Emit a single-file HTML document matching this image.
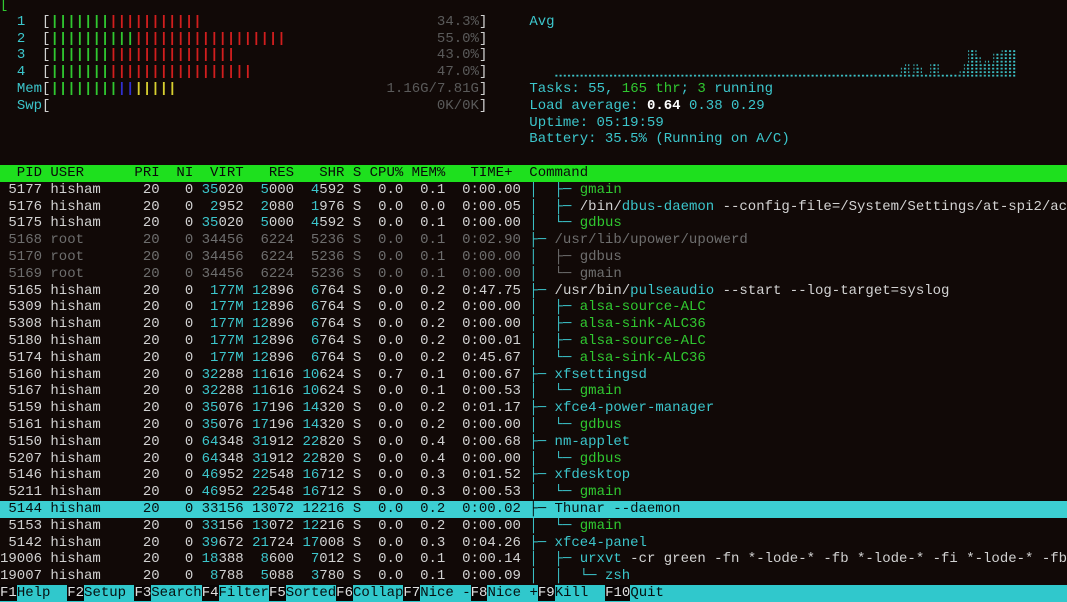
<!DOCTYPE html>
<html><head><meta charset="utf-8">
<style>
html,body{margin:0;padding:0;background:#110907;width:1067px;height:598px;overflow:hidden}
#t{position:absolute;left:0;top:-3px;margin:0;font-family:"Liberation Mono","DejaVu Sans Mono",monospace;font-size:14px;line-height:16.8px;color:#d2d2d2;white-space:pre}
#t div{height:16.8px;width:1067px;overflow:hidden}
.c{color:#3cc6cc}.g{color:#30c830}.r{color:#d21e1e}.b{color:#3030d0}.y{color:#d8d030}
.d{color:#6e6e6e}.w{color:#ffffff;font-weight:bold}.p{color:#5a5a5a}
.bar{font-weight:bold}
.hd{background:#1ee01e;color:#0a0a0a}
.sel{background:#3ccfd2;color:#061010}
.sel span{color:#061010}
.bot{background:#30c8cc;color:#061010}
.k{background:#0a0505;color:#e0e0e0}
#gr{position:absolute;left:0;top:0}
</style></head><body>
<pre id="t"><div><span class="g">[</span></div><div>  <span class="c">1</span>  [<span class="bar"><span class="g">|||||||</span><span class="r">|||||||||||</span></span>                            <span class="p">34.3%</span>]     <span class="c">Avg</span></div><div>  <span class="c">2</span>  [<span class="bar"><span class="g">||||||||||</span><span class="r">||||||||||||||||||</span></span>                  <span class="p">55.0%</span>]</div><div>  <span class="c">3</span>  [<span class="bar"><span class="g">|||||||</span><span class="r">|||||||||||||||</span></span>                        <span class="p">43.0%</span>]</div><div>  <span class="c">4</span>  [<span class="bar"><span class="g">|||||||</span><span class="r">|||||||||||||||||</span></span>                      <span class="p">47.0%</span>]</div><div>  <span class="c">Mem</span>[<span class="bar"><span class="g">||||||||</span><span class="b">||</span><span class="y">|||||</span></span>                         <span class="p">1.16G/7.81G</span>]     <span class="c">Tasks: 55, </span><span class="g">165 thr</span><span class="c">; </span><span class="g">3</span><span class="c"> running</span></div><div>  <span class="c">Swp</span>[                                              <span class="p">0K/0K</span>]     <span class="c">Load average: </span><span class="w">0.64</span> <span class="c">0.38 0.29</span></div><div>                                                               <span class="c">Uptime: 05:19:59</span></div><div>                                                               <span class="c">Battery: 35.5% (Running on A/C)</span></div><div> </div><div class="hd">  PID USER      PRI  NI  VIRT   RES   SHR S CPU% MEM%   TIME+  Command</div><div> 5177 hisham     20   0 <span class="c">35</span>020  <span class="c">5</span>000  <span class="c">4</span>592 S  0.0  0.1  0:00.00 <span class="c">│  ├─</span> <span class="g">gmain</span></div><div> 5176 hisham     20   0  <span class="c">2</span>952  <span class="c">2</span>080  <span class="c">1</span>976 S  0.0  0.0  0:00.05 <span class="c">│  ├─</span> /bin/<span class="c">dbus-daemon</span> --config-file=/System/Settings/at-spi2/accessibility.conf</div><div> 5175 hisham     20   0 <span class="c">35</span>020  <span class="c">5</span>000  <span class="c">4</span>592 S  0.0  0.1  0:00.00 <span class="c">│  └─</span> <span class="g">gdbus</span></div><div class="d"> 5168 root       20   0 34456  6224  5236 S  0.0  0.1  0:02.90 <span class="c">├─</span> /usr/lib/upower/upowerd</div><div class="d"> 5170 root       20   0 34456  6224  5236 S  0.0  0.1  0:00.00 <span class="c">│</span>  ├─ gdbus</div><div class="d"> 5169 root       20   0 34456  6224  5236 S  0.0  0.1  0:00.00 <span class="c">│</span>  └─ gmain</div><div> 5165 hisham     20   0  <span class="c">177M</span> <span class="c">12</span>896  <span class="c">6</span>764 S  0.0  0.2  0:47.75 <span class="c">├─</span> /usr/bin/<span class="c">pulseaudio</span> --start --log-target=syslog</div><div> 5309 hisham     20   0  <span class="c">177M</span> <span class="c">12</span>896  <span class="c">6</span>764 S  0.0  0.2  0:00.00 <span class="c">│  ├─</span> <span class="g">alsa-source-ALC</span></div><div> 5308 hisham     20   0  <span class="c">177M</span> <span class="c">12</span>896  <span class="c">6</span>764 S  0.0  0.2  0:00.00 <span class="c">│  ├─</span> <span class="g">alsa-sink-ALC36</span></div><div> 5180 hisham     20   0  <span class="c">177M</span> <span class="c">12</span>896  <span class="c">6</span>764 S  0.0  0.2  0:00.01 <span class="c">│  ├─</span> <span class="g">alsa-source-ALC</span></div><div> 5174 hisham     20   0  <span class="c">177M</span> <span class="c">12</span>896  <span class="c">6</span>764 S  0.0  0.2  0:45.67 <span class="c">│  └─</span> <span class="g">alsa-sink-ALC36</span></div><div> 5160 hisham     20   0 <span class="c">32</span>288 <span class="c">11</span>616 <span class="c">10</span>624 S  0.7  0.1  0:00.67 <span class="c">├─ xfsettingsd</span></div><div> 5167 hisham     20   0 <span class="c">32</span>288 <span class="c">11</span>616 <span class="c">10</span>624 S  0.0  0.1  0:00.53 <span class="c">│  └─</span> <span class="g">gmain</span></div><div> 5159 hisham     20   0 <span class="c">35</span>076 <span class="c">17</span>196 <span class="c">14</span>320 S  0.0  0.2  0:01.17 <span class="c">├─ xfce4-power-manager</span></div><div> 5161 hisham     20   0 <span class="c">35</span>076 <span class="c">17</span>196 <span class="c">14</span>320 S  0.0  0.2  0:00.00 <span class="c">│  └─</span> <span class="g">gdbus</span></div><div> 5150 hisham     20   0 <span class="c">64</span>348 <span class="c">31</span>912 <span class="c">22</span>820 S  0.0  0.4  0:00.68 <span class="c">├─ nm-applet</span></div><div> 5207 hisham     20   0 <span class="c">64</span>348 <span class="c">31</span>912 <span class="c">22</span>820 S  0.0  0.4  0:00.00 <span class="c">│  └─</span> <span class="g">gdbus</span></div><div> 5146 hisham     20   0 <span class="c">46</span>952 <span class="c">22</span>548 <span class="c">16</span>712 S  0.0  0.3  0:01.52 <span class="c">├─ xfdesktop</span></div><div> 5211 hisham     20   0 <span class="c">46</span>952 <span class="c">22</span>548 <span class="c">16</span>712 S  0.0  0.3  0:00.53 <span class="c">│  └─</span> <span class="g">gmain</span></div><div class="sel"> 5144 hisham     20   0 33156 13072 12216 S  0.0  0.2  0:00.02 ├─ Thunar --daemon</div><div> 5153 hisham     20   0 <span class="c">33</span>156 <span class="c">13</span>072 <span class="c">12</span>216 S  0.0  0.2  0:00.00 <span class="c">│  └─</span> <span class="g">gmain</span></div><div> 5142 hisham     20   0 <span class="c">39</span>672 <span class="c">21</span>724 <span class="c">17</span>008 S  0.0  0.3  0:04.26 <span class="c">├─ xfce4-panel</span></div><div>19006 hisham     20   0 <span class="c">18</span>388  <span class="c">8</span>600  <span class="c">7</span>012 S  0.0  0.1  0:00.14 <span class="c">│  ├─ urxvt</span> -cr green -fn *-lode-* -fb *-lode-* -fi *-lode-* -fb</div><div>19007 hisham     20   0  <span class="c">8</span>788  <span class="c">5</span>088  <span class="c">3</span>780 S  0.0  0.1  0:00.09 <span class="c">│  │  └─ zsh</span></div><div class="bot"><span class="k">F1</span>Help  <span class="k">F2</span>Setup <span class="k">F3</span>Search<span class="k">F4</span>Filter<span class="k">F5</span>Sorted<span class="k">F6</span>Collap<span class="k">F7</span>Nice -<span class="k">F8</span>Nice +<span class="k">F9</span>Kill  <span class="k">F10</span>Quit</div></pre>
<svg id="gr" width="1067" height="100" viewBox="0 0 1067 100">
<defs><pattern id="dp" x="0" y="0" width="4.2" height="3.5" patternUnits="userSpaceOnUse"><rect x="1" y="1.25" width="2" height="1.8" fill="#3cc6cc"/></pattern></defs>
<g fill="url(#dp)">
<rect x="554.4" y="73.5" width="346.5" height="3.5"/>
<rect x="900.9" y="66.5" width="4.2" height="10.5"/>
<rect x="905.1" y="63" width="4.2" height="14"/>
<rect x="909.3" y="73.5" width="4.2" height="3.5"/>
<rect x="913.5" y="63" width="4.2" height="14"/>
<rect x="917.7" y="66.5" width="4.2" height="10.5"/>
<rect x="921.9" y="73.5" width="8.4" height="3.5"/>
<rect x="930.3" y="63" width="8.4" height="14"/>
<rect x="938.7" y="73.5" width="21" height="3.5"/>
<rect x="959.7" y="70" width="4.2" height="7"/>
<rect x="963.9" y="63" width="4.2" height="14"/>
<rect x="968.1" y="49" width="8.4" height="28"/>
<rect x="976.5" y="56" width="4.2" height="21"/>
<rect x="980.7" y="63" width="4.2" height="14"/>
<rect x="984.9" y="59.5" width="4.2" height="17.5"/>
<rect x="989.1" y="63" width="4.2" height="14"/>
<rect x="993.3" y="52.5" width="8.4" height="24.5"/>
<rect x="1001.7" y="49" width="14.7" height="28"/>
</g>
</svg>
</body></html>
